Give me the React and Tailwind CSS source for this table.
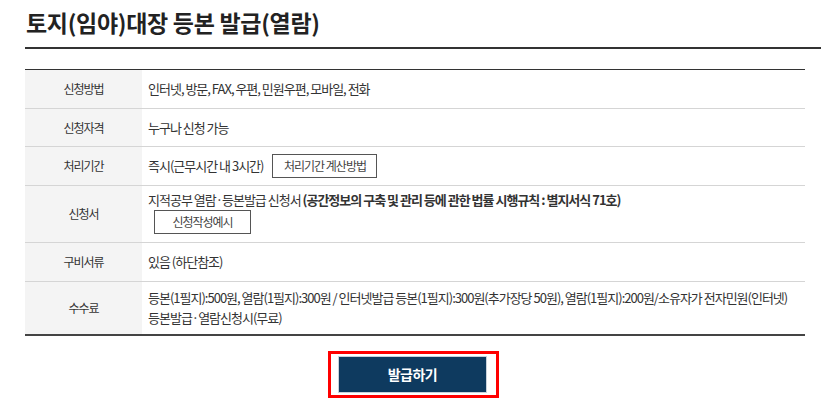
import React from "react";

const font = { fontFamily: '"Noto Sans CJK KR", "Noto Sans", sans-serif' };

function Row({ label, h, last, children }) {
  return (
    <div
      className={`flex ${last ? "border-b-2 border-[#444]" : "border-b border-[#d5d5d5]"}`}
    >
      <div
        className={`${h} w-[117px] shrink-0 bg-[#f4f4f4] flex items-center justify-center text-[12px] tracking-[-1px] text-[#333]`}
      >
        {label}
      </div>
      <div className={`${h} flex-1 pl-[6px] flex items-center text-[13px] tracking-[-1px] text-[#333] leading-[20px]`}>
        {children}
      </div>
    </div>
  );
}

export default function App() {
  return (
    <div className="w-[821px] h-[410px] bg-white pl-[25px] overflow-hidden" style={font}>
      <div className="pt-[7px] pb-[10px] border-b-2 border-[#333]">
        <h1 className="pl-[1px] text-[23px] leading-[30px] font-bold tracking-[-0.3px] text-[#222]">
          토지(임야)대장 등본 발급(열람)
        </h1>
      </div>

      <div className="mt-[20px] mr-[16px] border-t border-[#333]">
        <Row label="신청방법" h="h-[38px]">
          인터넷, 방문, FAX, 우편, 민원우편, 모바일, 전화
        </Row>
        <Row label="신청자격" h="h-[37px]">
          누구나 신청 가능
        </Row>
        <Row label="처리기간" h="h-[38px]">
          <span>즉시(근무시간 내 3시간)</span>
          <span className="ml-[9px] w-[105px] h-[24px] border border-[#555] flex items-center justify-center text-[12px] text-[#444]">
            처리기간 계산방법
          </span>
        </Row>
        <div className="flex border-b border-[#d5d5d5]">
          <div className="h-[56px] w-[117px] shrink-0 bg-[#f4f4f4] flex items-center justify-center text-[12px] tracking-[-1px] text-[#333]">
            신청서
          </div>
          <div className="h-[56px] flex-1 pl-[6px] pt-[4px] flex flex-col items-start text-[13px] tracking-[-1px] text-[#333] leading-[20px]">
            <div className="whitespace-nowrap">
              지적공부 열람·등본발급 신청서{" "}
              <b className="font-bold">(공간정보의 구축 및 관리 등에 관한 법률 시행규칙 : 별지서식 71호)</b>
            </div>
            <span className="ml-[6px] w-[97px] h-[24px] border border-[#555] flex items-center justify-center text-[12px] text-[#444]">
              신청작성예시
            </span>
          </div>
        </div>
        <Row label="구비서류" h="h-[38px]">
          있음 (하단참조)
        </Row>
        <Row label="수수료" h="h-[52px]" last>
          <div className="whitespace-nowrap">
            등본(1필지):500원, 열람(1필지):300원 / 인터넷발급 등본(1필지):300원(추가장당 50원), 열람(1필지):200원/소유자가 전자민원(인터넷)
            <br />
            등본발급·열람신청시(무료)
          </div>
        </Row>
      </div>

      <div className="mt-[15px] ml-[303px] w-[171px] h-[47px] border-[3px] border-[#ff0000] pt-[2px] pl-[7px]">
        <button className="w-[149px] h-[37px] bg-[#0e3a5f] border border-[#c9d2db] text-white text-[14px] font-bold tracking-[-0.5px] flex items-center justify-center">
          발급하기
        </button>
      </div>
    </div>
  );
}
